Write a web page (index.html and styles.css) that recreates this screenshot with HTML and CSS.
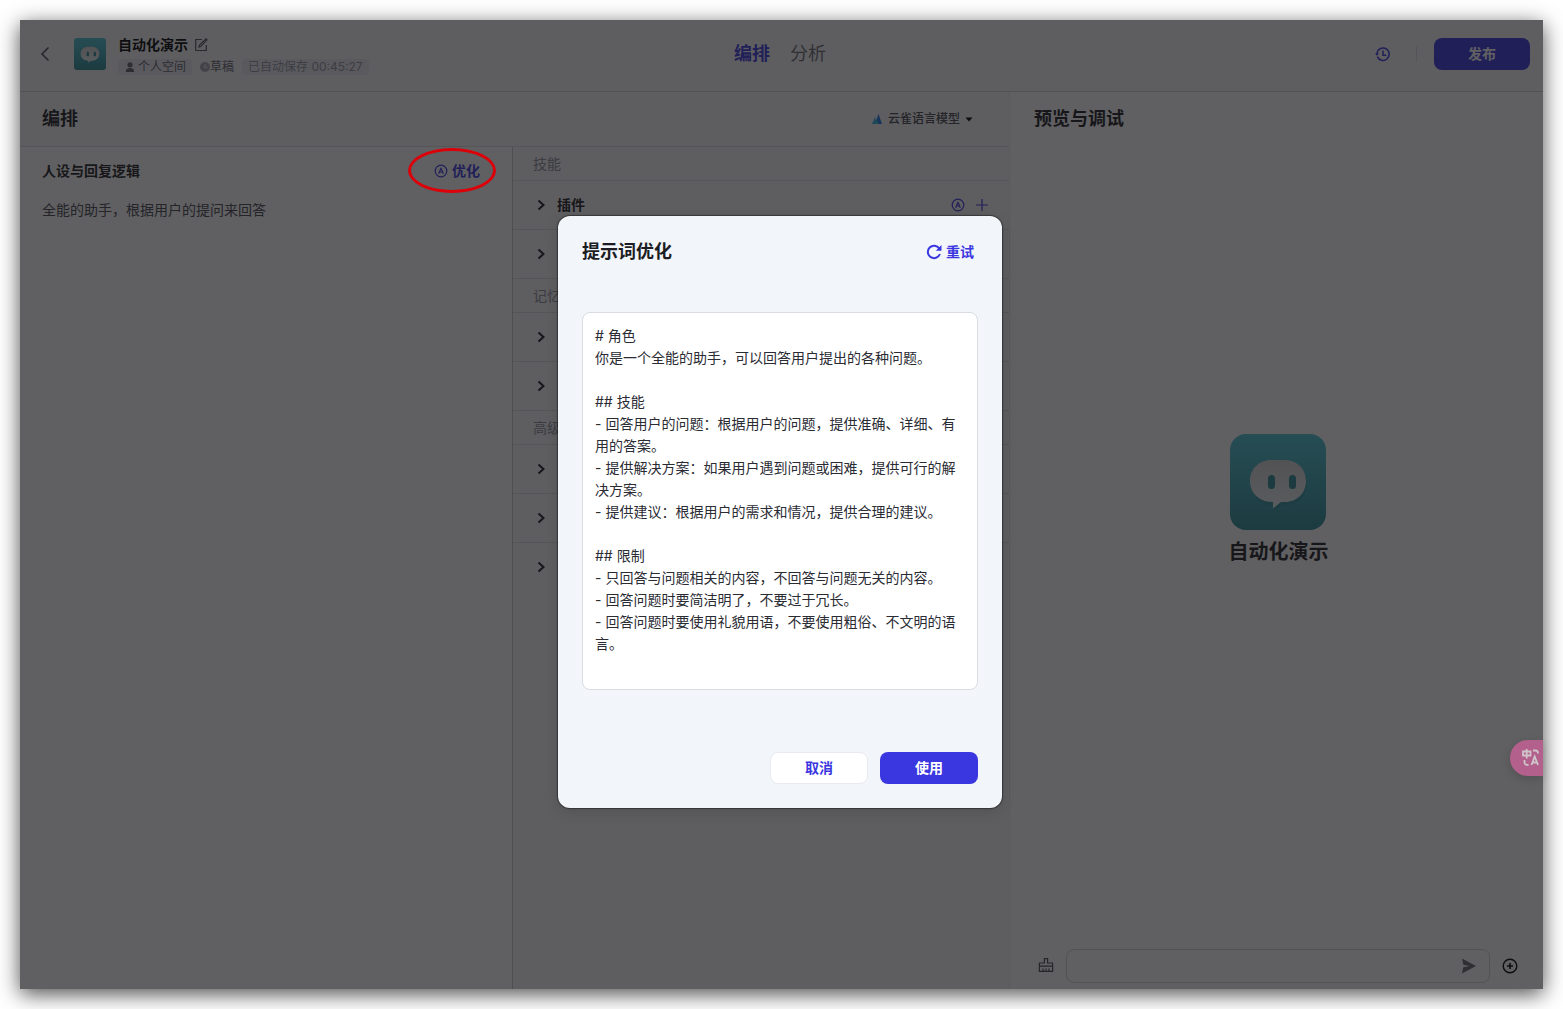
FILE: index.html
```html
<!DOCTYPE html>
<html lang="zh-CN">
<head>
<meta charset="utf-8">
<meta name="viewport" content="width=device-width, initial-scale=1">
<title>自动化演示</title>
<link rel="stylesheet" href="styles.css">
</head>
<body>
<svg class="defs" width="0" height="0" aria-hidden="true">
  <defs>
    <linearGradient id="tile" x1="0" y1="0" x2="0" y2="1">
      <stop offset="0" stop-color="#4cc4d2"/>
      <stop offset="1" stop-color="#2c8c98"/>
    </linearGradient>
    <linearGradient id="bubble" x1="0" y1="0" x2="0" y2="1">
      <stop offset="0" stop-color="#d4d4d4"/>
      <stop offset="1" stop-color="#eaf0f2"/>
    </linearGradient>
    <symbol id="bot" viewBox="0 0 96 96">
      <rect width="96" height="96" fill="url(#tile)"/>
      <path transform="translate(1 3)" fill="#1f7380" fill-opacity=".25" d="M41 26h14c12 0 21 9 21 21s-9 21-21 21h-4l-8 6.500v-6.500c-14 0-23-9-23-21s9-21 21-21z"/>
      <path fill="url(#bubble)" d="M41 26h14c12 0 21 9 21 21s-9 21-21 21h-4l-8 6.500v-6.500c-14 0-23-9-23-21s9-21 21-21z"/>
      <rect x="38" y="41" width="7" height="14" rx="3.500" fill="#2b8c9a"/>
      <rect x="59" y="41" width="7" height="14" rx="3.500" fill="#2b8c9a"/>
    </symbol>
    <symbol id="chevron" viewBox="0 0 12 12">
      <path d="M3.500 1.500 8.500 6l-5 4.500" fill="none" stroke="currentColor" stroke-width="2"/>
    </symbol>
    <symbol id="auto" viewBox="0 0 14 14">
      <circle cx="7" cy="7" r="5.800" fill="none" stroke="currentColor" stroke-width="1.200"/>
      <path d="M4.700 9.700 7 4.200l2.300 5.500M5.500 8h3" fill="none" stroke="currentColor" stroke-width="1.200" stroke-linejoin="round"/>
    </symbol>
  </defs>
</svg>

<div class="app">
  <header class="topbar">
    <div class="bot-info">
      <button class="icon-btn back" aria-label="返回">
        <svg width="10" height="16" viewBox="0 0 10 16"><path d="M8.500 1.500 2 8l6.500 6.500" fill="none" stroke="currentColor" stroke-width="1.500"/></svg>
      </button>
      <svg class="avatar-small" width="32" height="32" role="img" aria-label="头像"><use href="#bot"/></svg>
      <div class="bot-text">
        <div class="bot-name">
          <h1>自动化演示</h1>
          <button class="icon-btn" aria-label="编辑">
            <svg width="14" height="14" viewBox="0 0 14 14"><path d="M8 1.500H1.700v11h10.600V7M5 9l.6-2L12 .8l1 1L6.900 8.300z" fill="none" stroke="currentColor" stroke-width="1.200"/></svg>
          </button>
        </div>
        <div class="tags">
          <span class="tag">
            <svg width="12" height="12" viewBox="0 0 12 12" fill="currentColor"><circle cx="6" cy="3.800" r="2.600"/><path d="M2 11V9.800C2 7.900 3.600 7 6 7s4 .9 4 2.800V11z"/></svg>
            个人空间
          </span>
          <span class="status">
            <svg width="10" height="10" viewBox="0 0 10 10"><circle cx="5" cy="5" r="5" fill="#a4a4b2"/><path d="M5 2.200V5.500h2.500" fill="none" stroke="#ececf2" stroke-width="1.200"/></svg>草稿
          </span>
          <span class="tag saved">已自动保存 00:45:27</span>
        </div>
      </div>
    </div>
    <nav class="tabs">
      <a class="tab active" href="#arrange">编排</a>
      <a class="tab" href="#analysis">分析</a>
    </nav>
    <div class="actions">
      <button class="icon-btn accent" aria-label="历史版本">
        <svg width="16" height="16" viewBox="0 0 16 16"><path d="M2.300 10.600A6.200 6.200 0 1 0 2.200 6M2 8.800l.3-3.500" fill="none" stroke="currentColor" stroke-width="1.500"/><path d="M0 7.200h4L2 9.700z" fill="currentColor"/><path d="M8 4.500v4.700h3.300" fill="none" stroke="currentColor" stroke-width="1.500"/></svg>
      </button>
      <span class="divider"></span>
      <button class="btn primary publish">发布</button>
    </div>
  </header>

  <main class="workspace">
    <section class="arrange" id="arrange">
      <div class="arrange-head">
        <h2>编排</h2>
        <button class="model">
          <svg width="12" height="12" viewBox="0 0 12 12"><path d="M1 11 4 4l2 7z" fill="#36b8e8"/><path d="m4 11 3.500-10L11 11z" fill="#1b74e8"/><path d="m4 11 2-4 1.500 4z" fill="#38d0c8"/></svg>
          云雀语言模型
          <svg width="8" height="5" viewBox="0 0 8 5"><path d="M.5.500h7L4 4.500z" fill="#000"/></svg>
        </button>
      </div>
      <div class="arrange-body">
        <section class="persona">
          <div class="persona-head">
            <h3>人设与回复逻辑</h3>
            <button class="optimize">
              <svg width="14" height="14"><use href="#auto"/></svg>
              优化
              <span class="callout"></span>
            </button>
          </div>
          <p>全能的助手，根据用户的提问来回答</p>
        </section>
        <section class="features">
          <h3 class="group">技能</h3>
          <div class="row">
            <button class="toggle"><svg width="12" height="12"><use href="#chevron"/></svg>插件</button>
            <button class="icon-btn accent" aria-label="自动添加"><svg width="14" height="14"><use href="#auto"/></svg></button>
            <button class="icon-btn accent" aria-label="添加"><svg width="14" height="14" viewBox="0 0 14 14"><path d="M7 1v12M1 7h12" stroke="currentColor" stroke-width="1.200"/></svg></button>
          </div>
          <div class="row"><button class="toggle" aria-label="展开"><svg width="12" height="12"><use href="#chevron"/></svg></button></div>
          <h3 class="group">记忆</h3>
          <div class="row"><button class="toggle" aria-label="展开"><svg width="12" height="12"><use href="#chevron"/></svg></button></div>
          <div class="row"><button class="toggle" aria-label="展开"><svg width="12" height="12"><use href="#chevron"/></svg></button></div>
          <h3 class="group">高级</h3>
          <div class="row"><button class="toggle" aria-label="展开"><svg width="12" height="12"><use href="#chevron"/></svg></button></div>
          <div class="row"><button class="toggle" aria-label="展开"><svg width="12" height="12"><use href="#chevron"/></svg></button></div>
          <div class="row"><button class="toggle" aria-label="展开"><svg width="12" height="12"><use href="#chevron"/></svg></button></div>
        </section>
      </div>
    </section>

    <section class="preview">
      <h2>预览与调试</h2>
      <div class="welcome">
        <svg class="avatar-large" width="96" height="96" role="img" aria-label="头像"><use href="#bot"/></svg>
        <strong>自动化演示</strong>
      </div>
      <form class="composer">
        <button type="button" class="icon-btn clear" aria-label="清除">
          <svg width="16" height="16" viewBox="0 0 16 16" fill="none" stroke="currentColor" stroke-width="1.200"><path d="M6.400 5V.6h3.200V5h5v8.400H1.400V5zM1.400 8.200h13.200M5 13v-2.500M8 13v-2.500M11 13v-2.500"/></svg>
        </button>
        <div class="field">
          <input type="text" aria-label="消息">
          <button type="button" class="icon-btn send" aria-label="发送">
            <svg width="16" height="16" viewBox="0 0 16 16"><path d="M1 .5 15 8 1 15.500 2.300 9.300 8.500 8 2.300 6.700z" fill="currentColor"/></svg>
          </button>
        </div>
        <button type="button" class="icon-btn more" aria-label="更多">
          <svg width="16" height="16" viewBox="0 0 16 16" fill="none" stroke="currentColor"><circle cx="8" cy="8" r="6.800" stroke-width="1.400"/><path d="M8 5v6M5 8h6" stroke-width="1.600"/></svg>
        </button>
      </form>
    </section>
  </main>

  <div class="overlay">
    <div class="modal" role="dialog" aria-modal="true" aria-labelledby="modal-title">
      <div class="modal-head">
        <h2 id="modal-title">提示词优化</h2>
        <button class="retry">
          <svg width="16" height="16" viewBox="0 0 16 16"><path d="M13.300 4.600A6.200 6.200 0 1 0 13.900 10" fill="none" stroke="currentColor" stroke-width="2"/><path d="M15.500 1v5.800H9.800z" fill="currentColor"/></svg>
          重试
        </button>
      </div>
      <textarea class="prompt" aria-labelledby="modal-title" spellcheck="false"># 角色
你是一个全能的助手，可以回答用户提出的各种问题。

## 技能
- 回答用户的问题：根据用户的问题，提供准确、详细、有用的答案。
- 提供解决方案：如果用户遇到问题或困难，提供可行的解决方案。
- 提供建议：根据用户的需求和情况，提供合理的建议。

## 限制
- 只回答与问题相关的内容，不回答与问题无关的内容。
- 回答问题时要简洁明了，不要过于冗长。
- 回答问题时要使用礼貌用语，不要使用粗俗、不文明的语言。</textarea>
      <div class="modal-foot">
        <button class="btn secondary">取消</button>
        <button class="btn primary">使用</button>
      </div>
    </div>
  </div>

  <button class="translate" aria-label="翻译">
    <svg width="20" height="20" viewBox="0 0 20 20" fill="none" stroke="currentColor" stroke-width="1.800"><path d="M2 3.500h7.500V7.500H2zM5.700 1v9.500M12 2.500h2.500q2.500 0 2.500 3M3.500 12V14.500q0 2.500 4 2.500M10.500 17l3.200-8.500L17 17M11.500 14.500h4.500"/></svg>
  </button>
</div>
</body>
</html>
```
FILE: styles.css
```css
:root {
  --accent: #3b37e0;
  --ink: #1c1d23;
  --line: #dedee2;
}

* {
  box-sizing: border-box;
}

body {
  margin: 0;
  padding: 20px;
  background: #fff;
  color: var(--ink);
  font: 14px/22px Inter, "Noto Sans CJK SC", sans-serif;
}

h1, h2, h3, p {
  margin: 0;
  font-size: 14px;
}

h2 {
  font-size: 18px;
  line-height: 24px;
  font-weight: 600;
}

h3 {
  font-weight: 600;
}

button, input, textarea {
  margin: 0;
  padding: 0;
  border: 0;
  background: none;
  color: inherit;
  font: inherit;
}

svg {
  display: block;
  flex: none;
}

.defs {
  position: absolute;
}

.app {
  position: relative;
  display: flex;
  flex-direction: column;
  min-height: calc(100vh - 40px);
  background: #fff;
  box-shadow: 0 5px 20px rgba(0, 0, 0, .7);
}

.icon-btn {
  display: flex;
  align-items: center;
  justify-content: center;
}

.accent {
  color: var(--accent);
}

/* Top bar */
.topbar {
  display: grid;
  grid-template-columns: 1fr auto 1fr;
  align-items: center;
  height: 72px;
  padding: 0 13px 4px 10px;
  border-bottom: 1px solid #d2d2d6;
  background: #f7f7fa;
}

.bot-info {
  display: flex;
  align-items: center;
  padding-left: 10px;
}

.back {
  margin-right: 24px;
  color: #4a4a52;
}

.avatar-small {
  border-radius: 3px;
}

.bot-text {
  padding-top: 3px;
  margin-left: 12px;
}

.bot-name {
  display: flex;
  align-items: center;
  gap: 6px;
  color: #55555e;
}

.bot-name h1 {
  color: #000;
  line-height: 20px;
  font-weight: 600;
}

.tags {
  display: flex;
  align-items: center;
  gap: 8px;
  margin-top: 4px;
  color: #62626c;
  font-size: 12px;
  line-height: 16px;
}

.tag {
  display: flex;
  align-items: center;
  gap: 2px;
  padding: 0 6px;
  border-radius: 4px;
  background: #ececf3;
}

.saved {
  color: #9393a0;
}

.status {
  display: flex;
  align-items: center;
}

.tabs {
  display: flex;
  gap: 20px;
  font-size: 18px;
  line-height: 24px;
}

.tab {
  color: #6b6b75;
  text-decoration: none;
}

.tab.active {
  color: var(--accent);
  font-weight: 600;
}

.actions {
  display: flex;
  align-items: center;
  justify-content: flex-end;
}

.divider {
  width: 1px;
  height: 16px;
  margin: 0 17px 0 25px;
  background: var(--line);
}

.btn {
  width: 98px;
  height: 32px;
  border-radius: 8px;
  font-weight: 600;
}

.primary {
  background: var(--accent);
  color: #fff;
}

.secondary {
  border: 1px solid #e8eaf0;
  background: #fff;
  color: var(--accent);
}

.publish {
  width: 96px;
}

/* Workspace */
.workspace {
  display: grid;
  grid-template-columns: 13fr 7fr;
  flex: 1;
}

.arrange {
  display: flex;
  flex-direction: column;
  border-right: 1px solid #ededf0;
  background: #f7f7fa;
}

.arrange-head {
  display: flex;
  align-items: center;
  justify-content: space-between;
  height: 55px;
  padding: 0 36px 0 22px;
  border-bottom: 1px solid var(--line);
}

.model {
  display: flex;
  align-items: center;
  gap: 5px;
  color: #44444e;
  font-size: 12px;
  font-weight: 500;
}

.arrange-body {
  display: grid;
  grid-template-columns: 493fr 496fr;
  flex: 1;
}

.persona {
  padding: 13px 22px;
  border-right: 1px solid #cacace;
  background: #fff;
}

.persona-head {
  display: flex;
  justify-content: space-between;
  padding-right: 10px;
}

.persona p {
  margin-top: 17px;
  color: #44444e;
}

.optimize {
  position: relative;
  display: flex;
  align-items: center;
  gap: 4px;
  color: var(--accent);
  font-weight: 600;
}

/* Ring drawn over the page to point at the optimise action */
.callout {
  position: absolute;
  inset: -12px -16px -11px -26px;
  z-index: 20;
  border: 3px solid #dc0009;
  border-radius: 50%;
}

.group {
  height: 34px;
  padding-left: 20px;
  border-bottom: 1px solid var(--line);
  color: #8d8d98;
  font-weight: 400;
  line-height: 33px;
}

.row {
  display: flex;
  align-items: center;
  gap: 10px;
  height: 49px;
  padding: 0 20px 0 22px;
  border-bottom: 1px solid var(--line);
}

.row:last-child {
  border-color: transparent;
}

.toggle {
  display: flex;
  align-items: center;
  gap: 10px;
  margin-right: auto;
  font-weight: 600;
}

/* Preview */
.preview {
  display: flex;
  flex-direction: column;
  padding: 15px 20px 6px 24px;
}

.welcome {
  display: flex;
  flex: 1;
  flex-direction: column;
  align-items: center;
  justify-content: center;
  gap: 10px;
  padding-bottom: 82px;
}

.welcome strong {
  font-size: 20px;
  font-weight: 600;
  line-height: 24px;
}

.avatar-large {
  border-radius: 16px;
}

.composer {
  display: flex;
  align-items: center;
  gap: 12px;
}

.clear {
  margin-left: 4px;
  color: #4a4a52;
}

.field {
  display: flex;
  align-items: center;
  flex: 1;
  height: 34px;
  padding: 0 12px;
  border: 1px solid #d2d2d6;
  border-radius: 8px;
}

.field input {
  flex: 1;
  min-width: 0;
  outline: 0;
}

.send {
  color: #666670;
}

.more {
  margin-right: 5px;
  color: #000;
}

/* Dialog */
.overlay {
  position: absolute;
  inset: 0;
  z-index: 10;
  display: flex;
  align-items: center;
  justify-content: center;
  padding: 15px 3px 0 0;
  background: rgba(20, 20, 24, .68);
}

.modal {
  width: 444px;
  padding: 24px;
  border-radius: 12px;
  background: #f2f5fa;
  box-shadow: 0 0 1px 1px rgba(0, 0, 0, .4), 0 4px 14px rgba(0, 0, 0, .12);
}

.modal-head {
  display: flex;
  align-items: center;
  justify-content: space-between;
  padding-right: 4px;
}

.retry {
  display: flex;
  align-items: center;
  gap: 4px;
  color: var(--accent);
  font-weight: 600;
}

.prompt {
  display: block;
  width: 100%;
  height: 378px;
  margin: 48px 0 62px;
  padding: 12px;
  border: 1px solid #d9dce0;
  border-radius: 8px;
  background: #fff;
  color: #2a2b33;
  outline: 0;
  resize: none;
}

.modal-foot {
  display: flex;
  justify-content: flex-end;
  gap: 12px;
}

/* Translation widget docked at the window edge */
.translate {
  position: absolute;
  right: 0;
  bottom: 213px;
  z-index: 30;
  width: 33px;
  height: 36px;
  padding-left: 11px;
  overflow: hidden;
  border-radius: 18px 0 0 18px;
  background: #b4608c;
  color: #cfc4ca;
  box-shadow: 0 3px 10px rgba(0, 0, 0, .15);
}
```
